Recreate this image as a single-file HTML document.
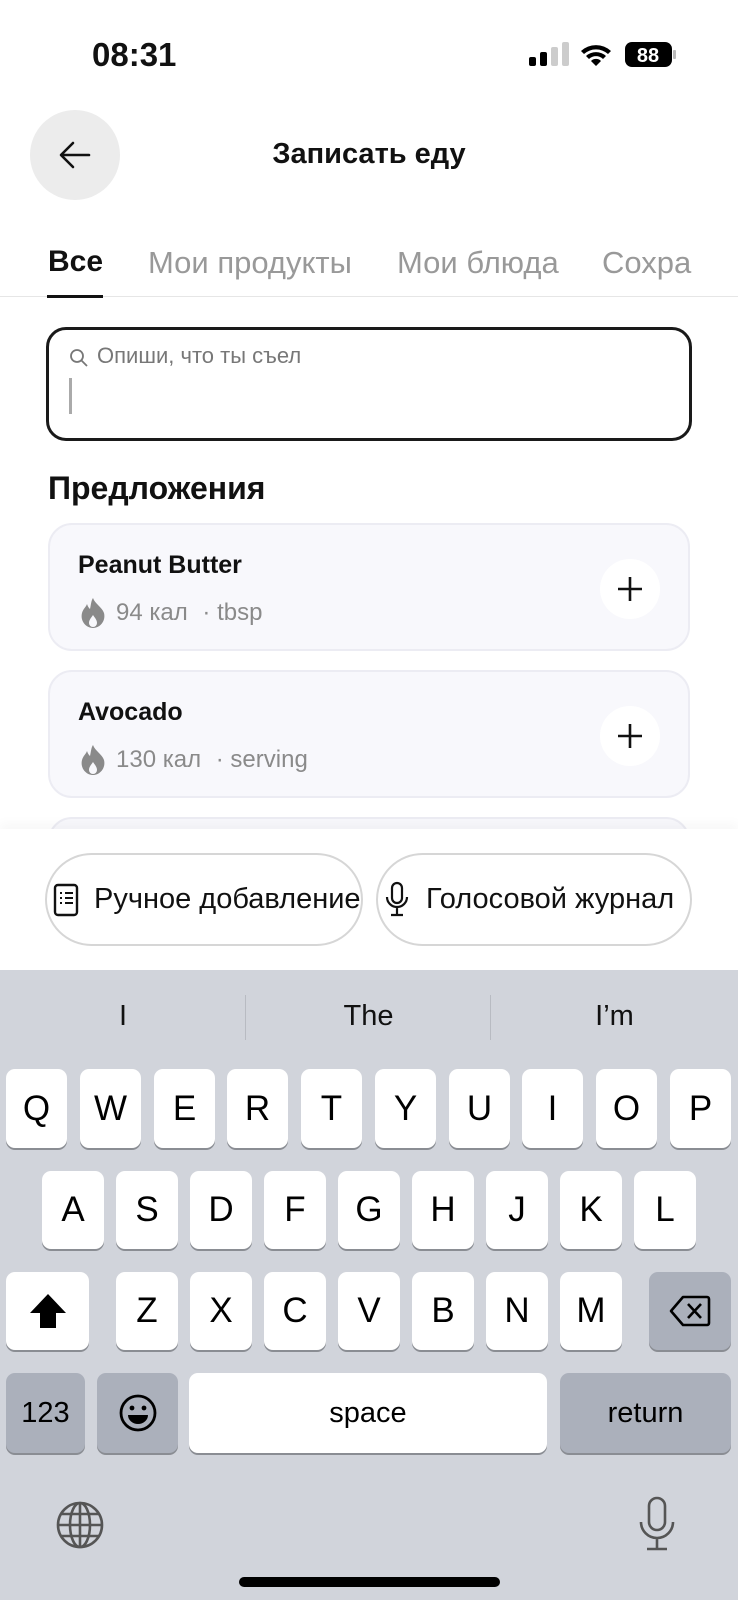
<!DOCTYPE html>
<html><head><meta charset="utf-8"><style>
*{margin:0;padding:0;box-sizing:border-box}
body{width:738px;height:1600px;position:relative;background:#fff;font-family:"Liberation Sans",sans-serif;overflow:hidden;color:#111}
.a{position:absolute}
.key{position:absolute;background:#fff;border-radius:9px;box-shadow:0 2px 0 #8a8d93;display:flex;align-items:center;justify-content:center;font-size:35px;color:#000}
.dk{background:#abb0bb}
.card{position:absolute;left:48px;width:642px;height:128px;background:#f8f8fc;border:2px solid #ececf3;border-radius:24px}
.ct{position:absolute;left:28px;top:26px;font-size:25px;font-weight:bold}
.cs{position:absolute;left:28px;top:72px;font-size:24px;color:#8a8a8a;display:flex;align-items:center;gap:8px}
.plus{position:absolute;right:28px;top:34px;width:60px;height:60px;border-radius:50%;background:#fff;display:flex;align-items:center;justify-content:center}
.pill{position:absolute;top:853px;height:93px;border:2px solid #d6d6d6;border-radius:47px;background:#fff;display:flex;align-items:center;font-size:29px;color:#111}
</style></head><body>
<div class="a" style="left:92px;top:36px;font-size:33px;font-weight:bold">08:31</div>
<svg class="a" style="left:527px;top:42px" width="150" height="26" viewBox="0 0 150 26">
<rect x="2" y="15" width="7" height="9" rx="2" fill="#000"/><rect x="13" y="10" width="7" height="14" rx="2" fill="#000"/><rect x="24" y="5" width="7" height="19" rx="2" fill="#ccc"/><rect x="35" y="0" width="7" height="24" rx="2" fill="#ccc"/>
<path d="M54 9a22 22 0 0 1 30 0l-3 3a18 18 0 0 0-24 0z M59 14a15 15 0 0 1 20 0l-3 3a10 10 0 0 0-14 0z M64 19a7 7 0 0 1 10 0l-5 5z" fill="#000"/>
<rect x="98" y="0" width="47" height="25" rx="7" fill="#000"/><text x="121" y="20" font-size="20" font-weight="bold" fill="#fff" text-anchor="middle" font-family="Liberation Sans">88</text><rect x="146" y="8" width="3" height="9" rx="1" fill="#bbb"/>
</svg>
<div class="a" style="left:30px;top:110px;width:90px;height:90px;border-radius:50%;background:#ececec"></div>
<svg class="a" style="left:58px;top:140px" width="34" height="30" viewBox="0 0 34 30"><path d="M31 15H4M15 3L3 15l12 12" fill="none" stroke="#111" stroke-width="2.6" stroke-linecap="round" stroke-linejoin="round"/></svg>
<div class="a" style="left:0;width:738px;top:138px;text-align:center;font-size:29px;font-weight:bold">Записать еду</div>
<div class="a" style="left:48px;top:245px;font-size:30px;font-weight:bold">Все</div>
<div class="a" style="left:148px;top:245px;font-size:31px;color:#999;white-space:nowrap">Мои продукты</div>
<div class="a" style="left:397px;top:245px;font-size:31px;color:#999;white-space:nowrap">Мои блюда</div>
<div class="a" style="left:602px;top:245px;width:90px;overflow:hidden;font-size:31px;color:#999;white-space:nowrap">Сохранённое</div>
<div class="a" style="left:0;top:296px;width:738px;height:1px;background:#e6e6e6"></div>
<div class="a" style="left:47px;top:295px;width:56px;height:3px;background:#111"></div>
<div class="a" style="left:46px;top:327px;width:646px;height:114px;border:3px solid #1a1a1a;border-radius:20px"></div>
<svg class="a" style="left:69px;top:348px" width="20" height="20" viewBox="0 0 20 20"><circle cx="8" cy="8" r="6" fill="none" stroke="#777" stroke-width="1.8"/><path d="M12.5 12.5L18 18" stroke="#777" stroke-width="1.8"/></svg>
<div class="a" style="left:97px;top:343px;font-size:22px;color:#777">Опиши, что ты съел</div>
<div class="a" style="left:69px;top:378px;width:3px;height:36px;background:#aaa"></div>
<div class="a" style="left:48px;top:470px;font-size:32px;font-weight:bold">Предложения</div>
<div class="card" style="top:523px"><div class="ct">Peanut Butter</div><div class="cs"><svg width="30" height="32" viewBox="0 0 30 32"><path d="M15 1c2 6 9 9 11 15 2 8-4 15-11 15S2 24 4 16c1-4 4-6 5-9 1 3 2 4 3 5 1-4 1-8 3-11z" fill="#8a8a8a"/><path d="M15 18c2 3 4 5 4 8a4 4 0 0 1-8 0c0-3 2-5 4-8z" fill="#f8f8fc"/></svg><span>94 кал</span><span>&nbsp;· tbsp</span></div><div class="plus"><svg width="28" height="28"><path d="M14 2v24M2 14h24" stroke="#111" stroke-width="2.6"/></svg></div></div>
<div class="card" style="top:670px"><div class="ct">Avocado</div><div class="cs"><svg width="30" height="32" viewBox="0 0 30 32"><path d="M15 1c2 6 9 9 11 15 2 8-4 15-11 15S2 24 4 16c1-4 4-6 5-9 1 3 2 4 3 5 1-4 1-8 3-11z" fill="#8a8a8a"/><path d="M15 18c2 3 4 5 4 8a4 4 0 0 1-8 0c0-3 2-5 4-8z" fill="#f8f8fc"/></svg><span>130 кал</span><span>&nbsp;· serving</span></div><div class="plus"><svg width="28" height="28"><path d="M14 2v24M2 14h24" stroke="#111" stroke-width="2.6"/></svg></div></div>
<div class="card" style="top:817px"></div>
<div class="a" style="left:0;top:829px;width:738px;height:141px;background:#fff;box-shadow:0 -6px 10px rgba(0,0,0,0.03)"></div>
<div class="pill" style="left:45px;width:318px"><svg style="margin-left:5px" width="28" height="36" viewBox="0 0 28 36"><rect x="3" y="3" width="22" height="30" rx="3" fill="none" stroke="#111" stroke-width="2.4"/><path d="M8 11h2M13 11h8M8 16h2M13 16h8M8 21h2M13 21h8" stroke="#111" stroke-width="2"/></svg><span style="margin-left:14px;white-space:nowrap">Ручное добавление</span></div>
<div class="pill" style="left:376px;width:316px"><svg style="margin-left:6px" width="26" height="40" viewBox="0 0 26 40"><rect x="8" y="3" width="10" height="20" rx="5" fill="none" stroke="#111" stroke-width="2.2"/><path d="M3 17a10 10 0 0 0 20 0M13 27v8M7 35h12" fill="none" stroke="#111" stroke-width="2.2"/></svg><span style="margin-left:16px;white-space:nowrap">Голосовой журнал</span></div>
<div class="a" style="left:0;top:970px;width:738px;height:630px;background:#d1d4db"></div>
<div class="a" style="left:0;top:1000px;width:246px;text-align:center;font-size:29px">I</div>
<div class="a" style="left:246px;top:1000px;width:245px;text-align:center;font-size:29px">The</div>
<div class="a" style="left:491px;top:1000px;width:247px;text-align:center;font-size:29px">I’m</div>
<div class="a" style="left:245px;top:995px;width:1px;height:45px;background:#b8bbc2"></div>
<div class="a" style="left:490px;top:995px;width:1px;height:45px;background:#b8bbc2"></div>
<div class="key" style="left:6px;top:1069px;width:61px;height:79px">Q</div><div class="key" style="left:80px;top:1069px;width:61px;height:79px">W</div><div class="key" style="left:154px;top:1069px;width:61px;height:79px">E</div><div class="key" style="left:227px;top:1069px;width:61px;height:79px">R</div><div class="key" style="left:301px;top:1069px;width:61px;height:79px">T</div><div class="key" style="left:375px;top:1069px;width:61px;height:79px">Y</div><div class="key" style="left:449px;top:1069px;width:61px;height:79px">U</div><div class="key" style="left:522px;top:1069px;width:61px;height:79px">I</div><div class="key" style="left:596px;top:1069px;width:61px;height:79px">O</div><div class="key" style="left:670px;top:1069px;width:61px;height:79px">P</div>
<div class="key" style="left:42px;top:1171px;width:62px;height:78px">A</div><div class="key" style="left:116px;top:1171px;width:62px;height:78px">S</div><div class="key" style="left:190px;top:1171px;width:62px;height:78px">D</div><div class="key" style="left:264px;top:1171px;width:62px;height:78px">F</div><div class="key" style="left:338px;top:1171px;width:62px;height:78px">G</div><div class="key" style="left:412px;top:1171px;width:62px;height:78px">H</div><div class="key" style="left:486px;top:1171px;width:62px;height:78px">J</div><div class="key" style="left:560px;top:1171px;width:62px;height:78px">K</div><div class="key" style="left:634px;top:1171px;width:62px;height:78px">L</div>
<div class="key" style="left:6px;top:1272px;width:83px;height:78px"><svg width="40" height="38" viewBox="0 0 40 38"><path d="M20 2L2 21h10v15h16V21h10z" fill="#000"/></svg></div>
<div class="key" style="left:116px;top:1272px;width:62px;height:78px">Z</div><div class="key" style="left:190px;top:1272px;width:62px;height:78px">X</div><div class="key" style="left:264px;top:1272px;width:62px;height:78px">C</div><div class="key" style="left:338px;top:1272px;width:62px;height:78px">V</div><div class="key" style="left:412px;top:1272px;width:62px;height:78px">B</div><div class="key" style="left:486px;top:1272px;width:62px;height:78px">N</div><div class="key" style="left:560px;top:1272px;width:62px;height:78px">M</div>
<div class="key dk" style="left:649px;top:1272px;width:82px;height:78px"><svg width="42" height="34" viewBox="0 0 42 34"><path d="M14 3h24a2 2 0 0 1 2 2v24a2 2 0 0 1-2 2H14L2 17z" fill="none" stroke="#000" stroke-width="2.6" stroke-linejoin="round"/><path d="M19 10l13 14M32 10L19 24" stroke="#000" stroke-width="2.6"/></svg></div>
<div class="key dk" style="left:6px;top:1373px;width:79px;height:80px;font-size:29px">123</div>
<div class="key dk" style="left:97px;top:1373px;width:81px;height:80px"><svg width="40" height="40" viewBox="0 0 40 40"><circle cx="20" cy="20" r="17" fill="none" stroke="#000" stroke-width="2.8"/><circle cx="14" cy="15" r="2.4"/><circle cx="26" cy="15" r="2.4"/><path d="M10 22h20a10 9 0 0 1-20 0z" fill="#000"/></svg></div>
<div class="key" style="left:189px;top:1373px;width:358px;height:80px;font-size:29px">space</div>
<div class="key dk" style="left:560px;top:1373px;width:171px;height:80px;font-size:29px">return</div>
<svg class="a" style="left:55px;top:1500px" width="50" height="50" viewBox="0 0 50 50"><g fill="none" stroke="#555" stroke-width="2.6"><circle cx="25" cy="25" r="22"/><ellipse cx="25" cy="25" rx="10" ry="22"/><path d="M25 3v44M3 25h44M7 14h36M7 36h36"/></g></svg>
<svg class="a" style="left:638px;top:1496px" width="38" height="56" viewBox="0 0 38 56"><g fill="none" stroke="#555" stroke-width="2.6"><rect x="11" y="2" width="16" height="32" rx="8"/><path d="M3 26a16 16 0 0 0 32 0M19 42v11M9 53h20"/></g></svg>
<div class="a" style="left:239px;top:1577px;width:261px;height:10px;border-radius:5px;background:#000"></div>
</body></html>
